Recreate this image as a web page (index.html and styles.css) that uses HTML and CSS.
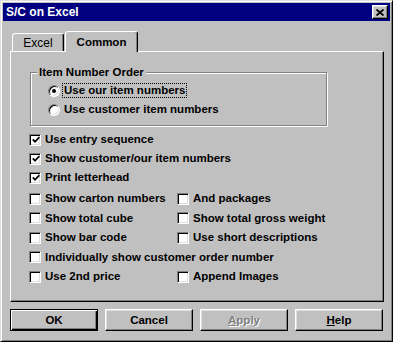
FILE: index.html
```html
<!DOCTYPE html>
<html>
<head>
<meta charset="utf-8">
<title>S/C on Excel</title>
<link rel="stylesheet" href="styles.css">
</head>
<body>
<div class="window">
  <div class="titlebar">
    <span class="title">S/C on Excel</span>
    <span class="close"><svg width="8" height="7" viewBox="0 0 8 7"><path d="M0.5 0.5 L7.5 6.5 M7.5 0.5 L0.5 6.5" stroke="#000" stroke-width="1.7" fill="none"/></svg></span>
  </div>
  <div class="content">
    <div class="tabs">
      <div class="tab">Excel</div>
      <div class="tab active">Common</div>
    </div>
    <div class="panel">
      <div class="group">
        <div class="legend">Item Number Order</div>
        <div class="radio-row first"><span class="radio checked"><span class="dot"></span></span><span class="focus">Use our item numbers</span></div>
        <div class="radio-row"><span class="radio"></span><span class="rlabel">Use customer item numbers</span></div>
      </div>
      <div class="checks">
        <div class="row"><div class="check on"><span class="box"><svg width="8" height="8" viewBox="0 0 8 8"><path d="M0.8 3.4 L3 5.8 L7.4 1.2" stroke="#000" stroke-width="1.8" fill="none"/></svg></span><span class="clabel">Use entry sequence</span></div></div>
        <div class="row"><div class="check on"><span class="box"><svg width="8" height="8" viewBox="0 0 8 8"><path d="M0.8 3.4 L3 5.8 L7.4 1.2" stroke="#000" stroke-width="1.8" fill="none"/></svg></span><span class="clabel">Show customer/our item numbers</span></div></div>
        <div class="row"><div class="check on"><span class="box"><svg width="8" height="8" viewBox="0 0 8 8"><path d="M0.8 3.4 L3 5.8 L7.4 1.2" stroke="#000" stroke-width="1.8" fill="none"/></svg></span><span class="clabel">Print letterhead</span></div></div>
        <div class="row tall gap"><div class="check col"><span class="box"></span><span class="clabel">Show carton numbers</span></div><div class="check"><span class="box"></span><span class="clabel">And packages</span></div></div>
        <div class="row tall"><div class="check col"><span class="box"></span><span class="clabel">Show total cube</span></div><div class="check"><span class="box"></span><span class="clabel">Show total gross weight</span></div></div>
        <div class="row tall"><div class="check col"><span class="box"></span><span class="clabel">Show bar code</span></div><div class="check"><span class="box"></span><span class="clabel">Use short descriptions</span></div></div>
        <div class="row tall"><div class="check"><span class="box"></span><span class="clabel">Individually show customer order number</span></div></div>
        <div class="row tall"><div class="check col"><span class="box"></span><span class="clabel">Use 2nd price</span></div><div class="check"><span class="box"></span><span class="clabel">Append Images</span></div></div>
      </div>
    </div>
    <div class="buttons">
      <div class="btn default">OK</div>
      <div class="btn">Cancel</div>
      <div class="btn disabled"><span class="u">A</span>pply</div>
      <div class="btn"><span class="u">H</span>elp</div>
    </div>
  </div>
</div>
</body>
</html>
```

FILE: styles.css
```css
html, body {
  margin: 0;
  padding: 0;
  background: #c0c0c0;
}
body {
  font-family: "Liberation Sans", Arial, sans-serif;
  font-size: 11.5px;
  font-weight: bold;
  color: #000;
}
.window {
  width: 393px;
  height: 342px;
  box-sizing: border-box;
  background: #c0c0c0;
  border: 1px solid;
  border-color: #dfdfdf #000 #000 #dfdfdf;
  box-shadow: inset 1px 1px 0 #fff, inset -1px -1px 0 #808080;
  padding: 2px;
}
.titlebar {
  height: 18px;
  background: #000080;
  display: flex;
  align-items: center;
  justify-content: space-between;
  padding: 0 2px 0 3px;
}
.title {
  color: #fff;
  font-size: 12px;
  font-weight: bold;
  line-height: 18px;
}
.close {
  width: 16px;
  height: 14px;
  box-sizing: border-box;
  background: #c0c0c0;
  border: 1px solid;
  border-color: #fff #000 #000 #fff;
  box-shadow: inset -1px -1px 0 #808080, inset 1px 1px 0 #dfdfdf;
  display: flex;
  align-items: center;
  justify-content: center;
}
.close svg { display: block; }
.content {
  padding: 10px 6px 0 7px;
}
.tabs {
  display: flex;
  align-items: flex-end;
  height: 20px;
  padding-left: 2px;
  position: relative;
  z-index: 1;
}
.tab {
  width: 52px;
  height: 18px;
  box-sizing: border-box;
  border: 1px solid;
  border-bottom: none;
  border-color: #fff #000 transparent #fff;
  border-radius: 3px 3px 0 0;
  box-shadow: inset -1px 0 0 #808080;
  background: #c0c0c0;
  display: flex;
  align-items: center;
  justify-content: center;
  font-weight: normal;
  font-size: 12px;
  padding-top: 1px;
}
.tab.active {
  width: 73px;
  height: 21px;
  margin-bottom: -1px;
  margin-left: 1px;
  font-weight: bold;
  font-size: 11.5px;
  padding-top: 0;
  padding-bottom: 1px;
}
.panel {
  height: 251px;
  box-sizing: border-box;
  border: 1px solid;
  border-color: #fff #000 #000 #fff;
  box-shadow: inset -1px -1px 0 #808080;
  padding: 0 0 0 18px;
}
.group {
  margin: 20px 0 0 1px;
  width: 297px;
  height: 54px;
  box-sizing: border-box;
  border: 1px solid #808080;
  box-shadow: 1px 1px 0 #fff, inset 1px 1px 0 #fff;
}
.legend {
  width: fit-content;
  margin: -8px 0 0 6px;
  padding: 0 2px;
  background: #c0c0c0;
  line-height: 14px;
}
.radio-row {
  display: flex;
  align-items: center;
  height: 19px;
  margin-left: 17px;
}
.radio-row.first { margin-top: 2px; }
.radio {
  width: 12px;
  height: 12px;
  box-sizing: border-box;
  border-radius: 50%;
  background: #fff;
  border: 1px solid;
  border-color: #808080 #fff #fff #808080;
  box-shadow: inset 1px 1px 0 #000, inset -1px -1px 0 #dfdfdf;
  display: flex;
  align-items: center;
  justify-content: center;
  flex: none;
}
.dot {
  width: 4px;
  height: 4px;
  border-radius: 50%;
  background: #000;
}
.focus {
  margin-left: 2px;
  border: 1px dotted #000;
  padding: 0 1px;
  line-height: 13px;
}
.rlabel {
  margin-left: 4px;
  line-height: 15px;
}
.checks {
  margin-top: 4px;
}
.row {
  display: flex;
  align-items: center;
  height: 19px;
}
.row.tall { height: 19.5px; }
.row.gap { margin-top: 2px; }
.check {
  display: flex;
  align-items: center;
}
.check.col { width: 148px; }
.box {
  width: 12px;
  height: 12px;
  box-sizing: border-box;
  background: #fff;
  border: 1px solid;
  border-color: #808080 #fff #fff #808080;
  box-shadow: inset 1px 1px 0 #000, inset -1px -1px 0 #dfdfdf;
  display: flex;
  align-items: center;
  justify-content: center;
  flex: none;
}
.box svg { display: block; margin: 1px 0 0 1px; }
.clabel {
  margin-left: 4px;
  line-height: 15px;
  white-space: nowrap;
}
.buttons {
  display: flex;
  gap: 7px;
  margin-top: 7px;
}
.btn {
  width: 88px;
  height: 22px;
  box-sizing: border-box;
  border: 1px solid;
  border-color: #fff #000 #000 #fff;
  box-shadow: inset -1px -1px 0 #808080, inset 1px 1px 0 #dfdfdf;
  display: flex;
  align-items: center;
  justify-content: center;
}
.btn.default {
  border-color: #000;
  box-shadow: inset 1px 1px 0 #fff, inset -1px -1px 0 #000, inset -2px -2px 0 #808080;
}
.btn.disabled {
  color: #808080;
  text-shadow: 1px 1px 0 #fff;
}
.u { text-decoration: underline; }
```
